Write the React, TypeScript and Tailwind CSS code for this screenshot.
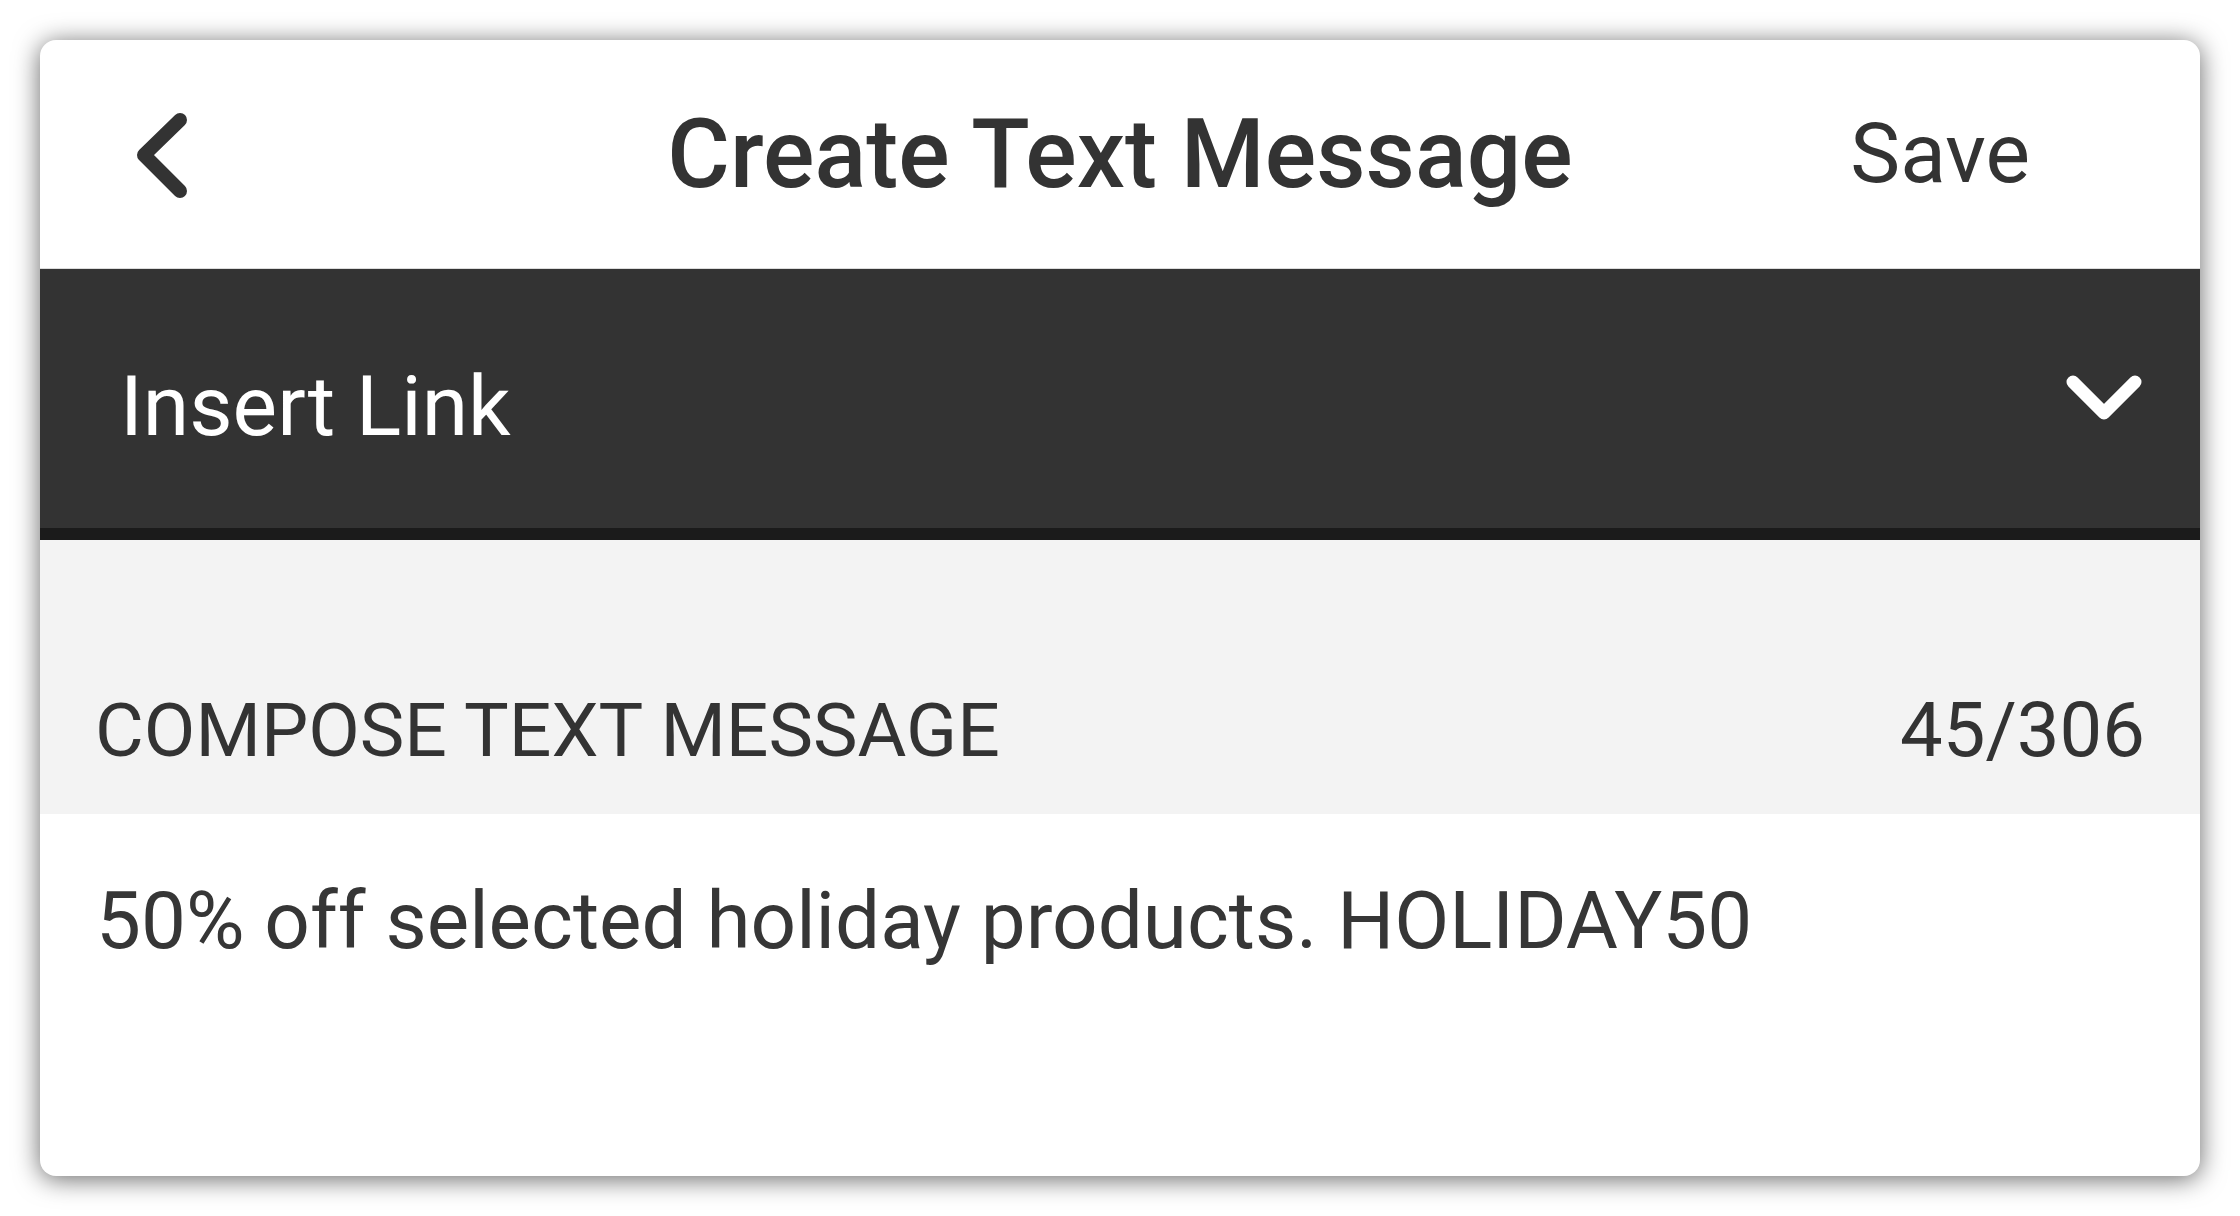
export default function App() {
  return (
    <main className="min-h-screen bg-white p-10" style={{ fontFamily: "Roboto, 'Noto Sans', sans-serif" }}>
      <div className="flex h-[1136px] w-[2160px] flex-col overflow-hidden rounded-[16px] bg-white shadow-[0_3px_26px_rgba(0,0,0,0.6)]">
        {/* header */}
        <header className="grid h-[229px] shrink-0 grid-cols-[1fr_auto_1fr] items-center border-b border-[#dcdcdc] text-[#333]">
          <div className="pl-[90px]">
            <svg width="62" height="96" viewBox="0 0 62 96" fill="none">
              <polyline points="50,14 14,49 50,85" stroke="#333" strokeWidth="14" strokeLinecap="round" strokeLinejoin="round" />
            </svg>
          </div>
          <h1 className="text-[96px] font-medium leading-none">Create Text Message</h1>
          <div className="flex justify-end pr-[170px]">
            <span className="text-[84px] leading-none">Save</span>
          </div>
        </header>

        {/* insert link bar */}
        <section className="flex h-[271px] shrink-0 items-center justify-between border-b-[12px] border-[#1b1b1b] bg-[#333] pl-[80px] pr-[53px] pt-4 text-white">
          <span className="text-[84px] leading-none">Insert Link</span>
          <svg width="86" height="58" viewBox="0 0 86 58" fill="none" className="-mt-[16px]">
            <polyline points="12,12 43,43 74,12" stroke="#fff" strokeWidth="13" strokeLinecap="round" strokeLinejoin="round" />
          </svg>
        </section>

        {/* compose label */}
        <section className="flex h-[274px] shrink-0 items-end justify-between bg-[#f3f3f3] px-[55px] pb-[46px] text-[#333]">
          <span className="text-[75px] leading-none">COMPOSE TEXT MESSAGE</span>
          <span className="text-[76px] leading-none">45/306</span>
        </section>

        {/* message body */}
        <section className="flex-1 px-[56px] pt-[67px] text-[#363636]">
          <p className="text-[80px] leading-none">50% off selected holiday products. HOLIDAY50</p>
        </section>
      </div>
    </main>
  );
}
